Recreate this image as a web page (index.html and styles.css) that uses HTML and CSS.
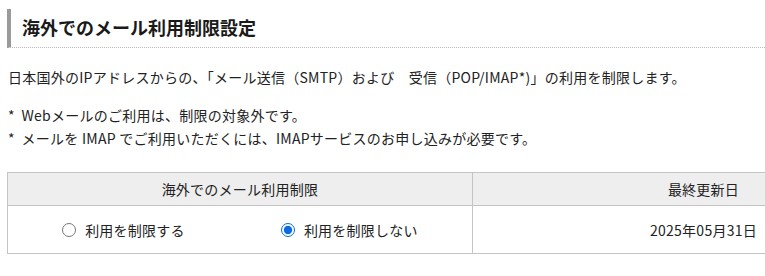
FILE: index.html
```html
<!DOCTYPE html>
<html lang="ja">
<head>
<meta charset="UTF-8" />
<meta name="viewport" content="width=device-width, initial-scale=1" />
<title>海外でのメール利用制限設定</title>
<link rel="stylesheet" href="styles.css">
</head>
<body>

<div class="content">
  <h2 class="section-title">海外でのメール利用制限設定</h2>

  <p class="lead">日本国外のIPアドレスからの、「メール送信（SMTP）および　受信（POP/IMAP*)」の利用を制限します。</p>

  <ul class="notes">
    <li>*&nbsp; Webメールのご利用は、制限の対象外です。</li>
    <li>*&nbsp; メールを IMAP でご利用いただくには、IMAPサービスのお申し込みが必要です。</li>
  </ul>

  <table class="setting-table">
    <thead>
      <tr>
        <th class="col-setting">海外でのメール利用制限</th>
        <th class="col-date">最終更新日</th>
      </tr>
    </thead>
    <tbody>
      <tr>
        <td class="col-setting">
          <div class="radio-group">
            <label class="radio"><input type="radio" name="limit" value="on"> 利用を制限する</label>
            <label class="radio"><input type="radio" name="limit" value="off" checked> 利用を制限しない</label>
          </div>
        </td>
        <td class="col-date">2025年05月31日</td>
      </tr>
    </tbody>
  </table>
</div>

</body>
</html>
```

FILE: styles.css
```css
html, body {
  overflow: hidden;
}

body {
  margin: 0;
  background: #fff;
  color: #222;
  font-family: "Noto Sans CJK JP", "Noto Sans", sans-serif;
  font-size: 14px;
  letter-spacing: 0.25px;
}

.content {
  width: 928px;
  padding: 9px 0 0 7px;
}

.section-title {
  margin: 0;
  padding: 4px 0 5px 11px;
  border-left: 4px solid #9a9a9a;
  border-bottom: 1px dotted #bbb;
  font-size: 18px;
  font-weight: bold;
  line-height: 29px;
  letter-spacing: 0;
  color: #1a1a1a;
}

.lead {
  margin: 18px 0 0 1px;
  line-height: 22px;
}

.notes {
  list-style: none;
  margin: 16px 0 0 1px;
  padding: 0;
}

.notes li {
  line-height: 23px;
}

.setting-table {
  margin-top: 22px;
  width: 928px;
  border-collapse: collapse;
}

.setting-table th,
.setting-table td {
  border: 1px solid #c4c4c4;
  text-align: center;
  font-weight: normal;
}

.setting-table th {
  background: #eeeeee;
  height: 32px;
  padding: 0;
}

.setting-table td {
  height: 47px;
  padding: 0;
}

.col-setting {
  width: 464px;
}

.radio-group {
  display: flex;
  justify-content: center;
  gap: 96px;
}

.radio {
  display: flex;
  align-items: center;
  gap: 9px;
}

.radio input {
  margin: 0;
  width: 14px;
  height: 14px;
  accent-color: #0a6ce0;
}
```
